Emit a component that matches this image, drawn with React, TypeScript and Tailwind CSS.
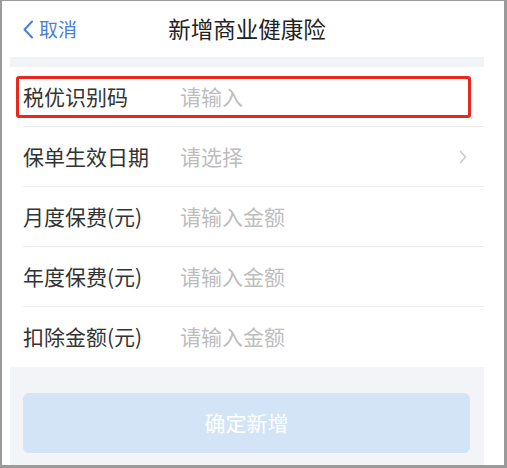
import React from "react";

const rows = [
  { label: "税优识别码", placeholder: "请输入", arrow: false },
  { label: "保单生效日期", placeholder: "请选择", arrow: true },
  { label: "月度保费(元)", placeholder: "请输入金额", arrow: false },
  { label: "年度保费(元)", placeholder: "请输入金额", arrow: false },
  { label: "扣除金额(元)", placeholder: "请输入金额", arrow: false },
];

const font = { fontFamily: '"Noto Sans CJK SC", "Noto Sans", sans-serif' };

export default function App() {
  return (
    <div
      className="relative h-[468px] w-[507px] overflow-hidden border-b-[3px] border-l-2 border-r-[3px] border-t border-[#9a9a9a] bg-white"
      style={font}
    >
      <div className="ml-[8px] w-[474px]">
        {/* header */}
        <div className="grid h-[56px] grid-cols-[1fr_auto_1fr] items-center">
          <div className="flex items-center pl-[12px] text-[19px] text-[#4a7ed6]">
            <svg width="12" height="19" viewBox="0 0 12 19" className="mr-[5px]">
              <path d="M10 1.5 L2.5 9.5 L10 17.5" fill="none" stroke="#4a7ed6" strokeWidth="2" strokeLinecap="round" strokeLinejoin="round" />
            </svg>
            <span>取消</span>
          </div>
          <div className="text-[22.5px] text-[#222]">新增商业健康险</div>
          <div />
        </div>
        <div className="h-[10px] bg-[#f2f3f7]" />

        {rows.map((r, i) => (
          <div key={r.label} className="h-[60px] pl-[13px]">
            <div
              className={
                "flex h-full items-center " +
                (i < rows.length - 1 ? "border-b border-[#ececec]" : "")
              }
            >
              <div className="w-[157px] text-[21px] text-[#333]">{r.label}</div>
              <div className="flex-1 text-[21px] text-[#bdbdbd]">{r.placeholder}</div>
              {r.arrow && (
                <svg width="8" height="14" viewBox="0 0 8 14" className="mr-[17px]">
                  <path d="M1.5 1.5 L6.5 7 L1.5 12.5" fill="none" stroke="#c8c8cc" strokeWidth="1.6" strokeLinecap="round" strokeLinejoin="round" />
                </svg>
              )}
            </div>
          </div>
        ))}

        <div className="h-[98px] bg-[#f3f4f8] pl-[13px] pr-[14px] pt-[26px]">
          <div className="flex h-[60px] items-center justify-center rounded-[6px] bg-[#d4e4f7] text-[21px] text-white">
            确定新增
          </div>
        </div>
      </div>

      {/* annotation */}
      <div className="absolute left-[14px] top-[75px] h-[42px] w-[455px] rounded-[3px] border-[3px] border-[#e8281e]" />
    </div>
  );
}
